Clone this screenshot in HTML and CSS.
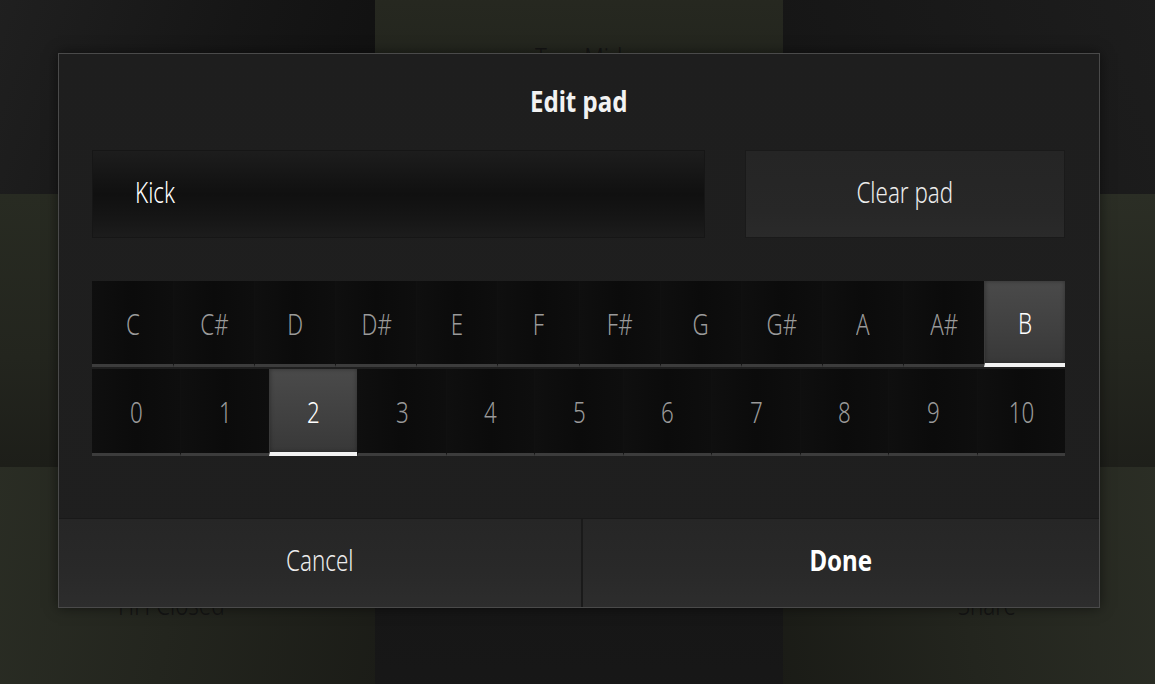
FILE: index.html
```html
<!DOCTYPE html>
<html>
<head>
<meta charset="utf-8">
<link rel="stylesheet" href="styles.css">
</head>
<body>
<div class="stage">
  <div class="board">
    <div class="pad pad-tl"></div>
    <div class="pad pad-tm"><span class="pad-label">Tom Mid</span></div>
    <div class="pad pad-tr"></div>
    <div class="pad pad-ml"><span class="pad-label">Kick</span></div>
    <div class="pad pad-mm"><span class="pad-label">Kick</span></div>
    <div class="pad pad-mr"><span class="pad-label">Clap</span></div>
    <div class="pad pad-bl"><span class="pad-label">HH Closed</span></div>
    <div class="pad pad-bm"></div>
    <div class="pad pad-br"><span class="pad-label">Snare</span></div>
  </div>

  <div class="modal">
    <div class="modal-title"><span class="txt txt-bold">Edit pad</span></div>
    <div class="name-row">
      <div class="name-input"><span class="txt txt-left">Kick</span></div>
      <div class="clear-btn"><span class="txt">Clear pad</span></div>
    </div>
    <div class="picker">
      <div class="seg seg-notes">
        <div class="cell"><span class="txt">C</span></div>
        <div class="cell"><span class="txt">C#</span></div>
        <div class="cell"><span class="txt">D</span></div>
        <div class="cell"><span class="txt">D#</span></div>
        <div class="cell"><span class="txt">E</span></div>
        <div class="cell"><span class="txt">F</span></div>
        <div class="cell"><span class="txt">F#</span></div>
        <div class="cell"><span class="txt">G</span></div>
        <div class="cell"><span class="txt">G#</span></div>
        <div class="cell"><span class="txt">A</span></div>
        <div class="cell"><span class="txt">A#</span></div>
        <div class="cell selected"><span class="txt">B</span></div>
      </div>
      <div class="seg seg-octaves">
        <div class="cell"><span class="txt">0</span></div>
        <div class="cell"><span class="txt">1</span></div>
        <div class="cell selected"><span class="txt">2</span></div>
        <div class="cell"><span class="txt">3</span></div>
        <div class="cell"><span class="txt">4</span></div>
        <div class="cell"><span class="txt">5</span></div>
        <div class="cell"><span class="txt">6</span></div>
        <div class="cell"><span class="txt">7</span></div>
        <div class="cell"><span class="txt">8</span></div>
        <div class="cell"><span class="txt">9</span></div>
        <div class="cell"><span class="txt">10</span></div>
      </div>
    </div>
    <div class="actions">
      <div class="action action-cancel"><span class="txt">Cancel</span></div>
      <div class="action action-done"><span class="txt txt-bold">Done</span></div>
    </div>
  </div>
</div>
</body>
</html>
```

FILE: styles.css
```css
html, body {
  margin: 0;
  padding: 0;
  background: #121212;
}

body {
  font-family: "Noto Sans", "DejaVu Sans", sans-serif;
  font-weight: 300;
}

.stage {
  position: relative;
  width: 1155px;
  height: 684px;
  overflow: hidden;
}

/* condensed rendering of the UI face */
.txt {
  display: inline-block;
  transform: scaleX(0.77);
  transform-origin: center center;
  white-space: nowrap;
}

.txt-bold {
  font-weight: 700;
  transform: scaleX(0.83);
}

.txt-left {
  transform-origin: left center;
}

.board {
  display: grid;
  grid-template-columns: repeat(3, 408px);
  grid-auto-rows: 273px;
  margin: -79px 0 0 -33px;
  width: 1224px;
}

.pad {
  display: flex;
  align-items: center;
  justify-content: center;
}

.pad-label {
  display: inline-block;
  font-size: 29px;
  color: #141414;
  transform: scaleX(0.77);
  white-space: nowrap;
}

.pad-tl { background: linear-gradient(110deg, #222222 0%, #161616 60%, #101010 100%); }
.pad-tm { background: linear-gradient(180deg, #2a2c23 0%, #22241d 60%, #1b1c17 100%); }
.pad-tr { background: linear-gradient(250deg, #1e1e1e 0%, #151515 100%); }
.pad-ml { background: linear-gradient(180deg, #282b22 0%, #23251e 60%, #1d1e19 100%); }
.pad-mm { background: #22241d; }
.pad-mr { background: linear-gradient(180deg, #2b2e25 0%, #24261f 60%, #1e1f1a 100%); }
.pad-bl { background: linear-gradient(100deg, #2b2e25 0%, #23251e 50%, #1b1c17 100%); }
.pad-bm { background: linear-gradient(180deg, #141414 0%, #181818 100%); }
.pad-br { background: linear-gradient(260deg, #2c2f26 0%, #23251e 55%, #1a1b16 100%); }

/* Modal */
.modal {
  position: absolute;
  left: 58px;
  top: 53px;
  width: 1040px;
  height: 553px;
  border: 1px solid #4a4a4a;
  background: linear-gradient(180deg, #1e1e1e 0%, #1f1f1f 100%);
  display: flex;
  flex-direction: column;
  box-shadow: 0 0 12px rgba(0, 0, 0, 0.5);
}

.modal-title {
  height: 96px;
  box-sizing: border-box;
  padding-bottom: 4px;
  display: flex;
  align-items: center;
  justify-content: center;
  color: #f2f2f2;
  font-size: 29px;
}

.name-row {
  display: flex;
  gap: 40px;
  margin: 0 34px 0 33px;
  height: 88px;
}

.name-input {
  flex: 1;
  display: flex;
  align-items: center;
  padding: 0 0 6px 42px;
  box-sizing: border-box;
  color: #ffffff;
  font-size: 29px;
  border: 1px solid #161616;
  background: linear-gradient(180deg, #1d1d1d 0%, #151515 30%, #101010 50%, #151515 75%, #1c1c1c 100%);
}

.clear-btn {
  width: 320px;
  box-sizing: border-box;
  padding-bottom: 6px;
  display: flex;
  align-items: center;
  justify-content: center;
  color: #ececec;
  font-size: 29px;
  border: 1px solid #1a1a1a;
  background: linear-gradient(180deg, #252525 0%, #272727 70%, #2a2a2a 100%);
}

.picker {
  margin: 43px 34px 0 33px;
  display: flex;
  flex-direction: column;
  gap: 2px;
}

.seg {
  display: grid;
  background: #0c0c0c;
}

.seg-notes {
  grid-template-columns: repeat(12, 1fr);
  height: 86px;
}

.seg-octaves {
  grid-template-columns: repeat(11, 1fr);
  height: 87px;
}

.cell {
  display: flex;
  align-items: center;
  justify-content: center;
  color: #9a9a9a;
  font-size: 29px;
  border-bottom: 3px solid #3c3c3c;
  border-left: 1px solid #101010;
  background: linear-gradient(90deg, #0f0f0f 0%, #0b0b0b 50%, #0e0e0e 100%);
  padding-top: 1px;
}

.cell:first-child {
  border-left: none;
}

.cell.selected {
  color: #ffffff;
  border-left-color: #3a3a3a;
  border-bottom: 4px solid #f2f2f2;
  background: linear-gradient(180deg, #4a4a4a 0%, #404040 60%, #383838 100%);
  box-shadow: inset 0 0 4px rgba(0, 0, 0, 0.35);
}

.actions {
  margin-top: auto;
  display: flex;
  gap: 2px;
  height: 89px;
  background: #1a1a1a;
  border-top: 1px solid #191919;
  box-sizing: border-box;
}

.action {
  display: flex;
  align-items: center;
  justify-content: center;
  box-sizing: border-box;
  padding-bottom: 7px;
  background: linear-gradient(180deg, #262626 0%, #292929 60%, #2d2d2d 100%);
  font-size: 29px;
  color: #ededed;
}

.action-cancel {
  width: 522px;
}

.action-done {
  flex: 1;
  color: #ffffff;
}
```
